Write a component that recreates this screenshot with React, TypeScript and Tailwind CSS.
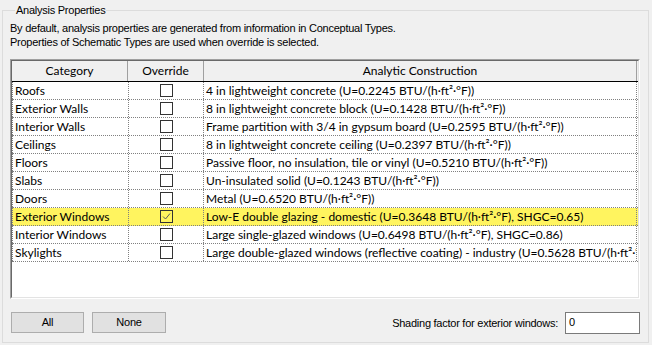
const rows: { cat: string; on: boolean; text: string }[] = [
  { cat: 'Roofs', on: false, text: '4 in lightweight concrete (U=0.2245 BTU/(h·ft²·°F))' },
  { cat: 'Exterior Walls', on: false, text: '8 in lightweight concrete block (U=0.1428 BTU/(h·ft²·°F))' },
  { cat: 'Interior Walls', on: false, text: 'Frame partition with 3/4 in gypsum board (U=0.2595 BTU/(h·ft²·°F))' },
  { cat: 'Ceilings', on: false, text: '8 in lightweight concrete ceiling (U=0.2397 BTU/(h·ft²·°F))' },
  { cat: 'Floors', on: false, text: 'Passive floor, no insulation, tile or vinyl (U=0.5210 BTU/(h·ft²·°F))' },
  { cat: 'Slabs', on: false, text: 'Un-insulated solid (U=0.1243 BTU/(h·ft²·°F))' },
  { cat: 'Doors', on: false, text: 'Metal (U=0.6520 BTU/(h·ft²·°F))' },
  { cat: 'Exterior Windows', on: true, text: 'Low-E double glazing - domestic (U=0.3648 BTU/(h·ft²·°F), SHGC=0.65)' },
  { cat: 'Interior Windows', on: false, text: 'Large single-glazed windows (U=0.6498 BTU/(h·ft²·°F), SHGC=0.86)' },
  { cat: 'Skylights', on: false, text: 'Large double-glazed windows (reflective coating) - industry (U=0.5628 BTU/(h·ft²·°F))' },
]

function CheckBox({ on }: { on: boolean }) {
  return (
    <span className="grid h-[13px] w-[13px] place-items-center border border-[#333333]">
      {on && (
        <svg width="9" height="9" viewBox="0 0 9 9">
          <path d="M1 4.5 L3.5 7 L8 1.5" fill="none" stroke="#5a5a5a" strokeWidth="1" />
        </svg>
      )}
    </span>
  )
}

export default function App() {
  return (
    <div className="h-[345px] w-[652px] overflow-hidden bg-[#f0f0f0] pl-[2px] pt-[2px] font-['Liberation_Sans',sans-serif] text-[11px] tracking-[-0.25px] text-black">
      <fieldset className="h-[341px] w-[647px] border border-[#dcdcdc] pl-[7px] pr-[8px]">
        <legend className="ml-[5px] px-px leading-[16px]">Analysis Properties</legend>
        <p className="mt-[3px] leading-[14px]">
          By default, analysis properties are generated from information in Conceptual Types.
          <br />
          Properties of Schematic Types are used when override is selected.
        </p>

        <div className="mt-[10px] h-[240px] w-[630px] border border-t-[#a0a0a0] border-l-[#a0a0a0] border-b-white border-r-white">
          <div className="h-full w-full overflow-hidden border border-t-[#696969] border-l-[#696969] border-b-[#e3e3e3] border-r-[#e3e3e3] bg-white font-['Segoe_UI','Lato',sans-serif] text-[12px] tracking-normal">
            <div className="grid h-[21px] grid-cols-[116px_76px_433px] border-b border-black bg-[#f0f0f0]">
              <div className="flex items-center justify-center border-r border-[#a0a0a0]">Category</div>
              <div className="flex items-center justify-center border-r border-[#a0a0a0]">Override</div>
              <div className="flex items-center justify-center border-r border-[#a0a0a0]">Analytic Construction</div>
            </div>
            {rows.map((r) => (
              <div
                key={r.cat}
                className={`grid h-[18px] grid-cols-[117px_75px_433px] border-b border-dotted border-[#808080] ${r.on ? 'bg-[#fff45f]' : ''}`}
              >
                <div className="flex items-center overflow-hidden whitespace-nowrap border-x border-dotted border-[#808080] pl-[2px]">
                  {r.cat}
                </div>
                <div className="flex items-center justify-center border-r border-dotted border-[#808080]">
                  <CheckBox on={r.on} />
                </div>
                <div className="flex items-center overflow-hidden whitespace-nowrap border-r border-dotted border-[#808080] pl-[2px]">
                  {r.text}
                </div>
              </div>
            ))}
          </div>
        </div>

        <div className="mt-[13px] flex items-start">
          <button className="ml-px h-[21px] w-[73px] border border-[#adadad] bg-[#e1e1e1]">All</button>
          <button className="ml-[8px] h-[21px] w-[74px] border border-[#adadad] bg-[#e1e1e1]">None</button>
          <span className="ml-auto mr-[7px] mt-[3px]">Shading factor for exterior windows:</span>
          <div className="h-[22px] w-[75px] border border-[#7a7a7a] bg-white pl-[3px] pt-[3px] leading-[13px]">0</div>
        </div>
      </fieldset>
    </div>
  )
}
